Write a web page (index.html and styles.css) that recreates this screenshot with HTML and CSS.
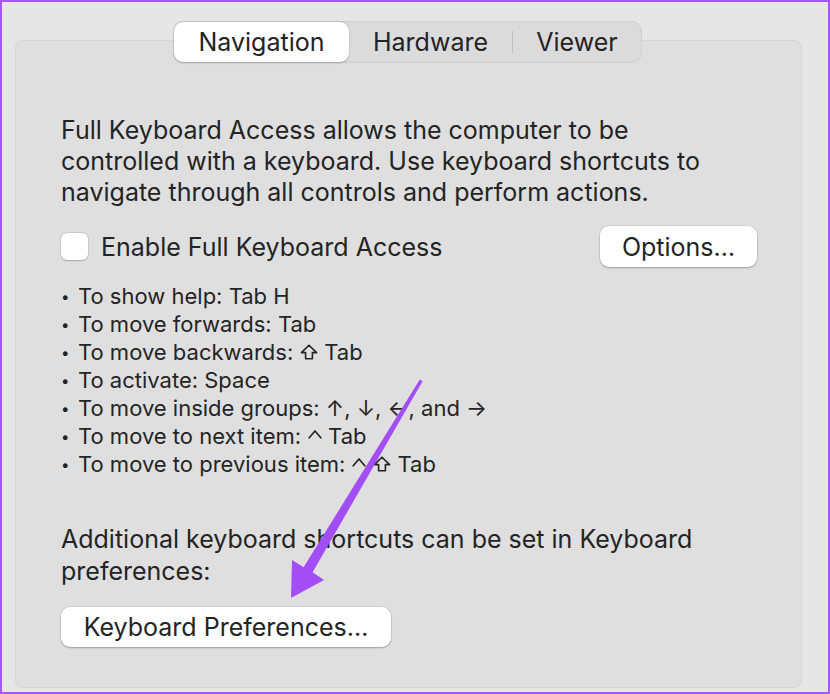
FILE: index.html
```html
<!DOCTYPE html>
<html>
<head>
<meta charset="utf-8">
<link rel="stylesheet" href="styles.css">
</head>
<body>
<div class="frame">
  <div class="tabs-row">
    <div class="tabs">
      <div class="tab tab-nav active">Navigation</div>
      <div class="tab tab-hw">Hardware</div>
      <div class="sep"></div>
      <div class="tab tab-view">Viewer</div>
    </div>
  </div>
  <div class="panel">
    <p class="intro">Full Keyboard Access allows the computer to be controlled with a keyboard. Use keyboard shortcuts to navigate through all controls and perform actions.</p>
    <div class="check-row">
      <label class="check"><span class="box"></span><span class="check-label">Enable Full Keyboard Access</span></label>
      <div class="btn btn-options">Options…</div>
    </div>
    <ul class="list">
      <li>To show help: Tab H</li>
      <li>To move forwards: Tab</li>
      <li><span>To move backwards:</span><svg class="key shift" width="18" height="16" viewBox="0 0 18 16"><path d="M9 1.2 L16.6 8.6 L12.4 8.6 L12.4 14.8 L5.6 14.8 L5.6 8.6 L1.4 8.6 Z" fill="none" stroke="#242424" stroke-width="1.6" stroke-linejoin="round"/></svg><span>Tab</span></li>
      <li>To activate: Space</li>
      <li>To move inside groups: ↑, ↓, ←, and →</li>
      <li><span>To move to next item:</span><svg class="key caret" width="14" height="10" viewBox="0 0 14 10"><path d="M1.2 8.8 L7 2 L12.8 8.8" fill="none" stroke="#242424" stroke-width="1.7" stroke-linecap="round" stroke-linejoin="round"/></svg><span>Tab</span></li>
      <li><span>To move to previous item:</span><svg class="key caret" width="14" height="10" viewBox="0 0 14 10"><path d="M1.2 8.8 L7 2 L12.8 8.8" fill="none" stroke="#242424" stroke-width="1.7" stroke-linecap="round" stroke-linejoin="round"/></svg><svg class="key shift" width="18" height="16" viewBox="0 0 18 16"><path d="M9 1.2 L16.6 8.6 L12.4 8.6 L12.4 14.8 L5.6 14.8 L5.6 8.6 L1.4 8.6 Z" fill="none" stroke="#242424" stroke-width="1.6" stroke-linejoin="round"/></svg><span>Tab</span></li>
    </ul>
    <p class="extra">Additional keyboard shortcuts can be set in Keyboard preferences:</p>
    <div class="btn btn-prefs">Keyboard Preferences…</div>
  </div>
  <svg class="arrow" width="830" height="694" viewBox="0 0 830 694">
    <path d="M419.8 379.4 L422.6 381.2 L312.6 572.2 L324 580 L291 598 L292 560 L303.6 567.2 Z" fill="#a24df5"/>
  </svg>
</div>
</body>
</html>
```
FILE: styles.css
```css
html, body {
  margin: 0;
  padding: 0;
}
body {
  width: 830px;
  height: 694px;
  overflow: hidden;
  font-family: Inter, "Noto Sans", "DejaVu Sans", sans-serif;
  color: #242424;
}
.frame {
  position: relative;
  box-sizing: border-box;
  width: 830px;
  height: 694px;
  border: 2px solid #a658f6;
  background: #e6e6e6;
  padding: 19px 25px 0 13px;
}
.tabs-row {
  display: flex;
  position: relative;
  z-index: 1;
  padding-left: 158px;
}
.tabs {
  display: flex;
  align-items: center;
  height: 42px;
  box-sizing: border-box;
  background: #dbdbdb;
  border: 1px solid #d0d0d0;
  border-radius: 10px;
  font-size: 25px;
}
.tab {
  height: 40px;
  box-sizing: border-box;
  display: flex;
  align-items: center;
  justify-content: center;
  border-radius: 9px;
}
.tab-nav { width: 175px; }
.tab-hw { width: 163px; }
.tab-view { width: 128px; }
.active {
  background: #ffffff;
  box-shadow: 0 0.5px 2px rgba(0,0,0,0.25);
}
.sep {
  width: 1px;
  height: 22px;
  background: #bdbdbd;
}
.panel {
  margin-top: -23px;
  width: 787px;
  height: 648px;
  box-sizing: border-box;
  background: #dfdfdf;
  border: 1px solid #d5d5d5;
  border-radius: 8px;
  padding: 74px 44px 0 45px;
}
.intro {
  margin: 0;
  font-size: 25px;
  line-height: 31px;
  width: 690px;
}
.check-row {
  margin-top: 18px;
  display: flex;
  align-items: center;
  justify-content: space-between;
  height: 41px;
}
.check {
  display: flex;
  align-items: center;
}
.box {
  width: 27px;
  height: 27px;
  box-sizing: border-box;
  background: #fff;
  border-radius: 6px;
  box-shadow: 0 0 0 0.5px rgba(0,0,0,0.12), 0 0.5px 1.5px rgba(0,0,0,0.2);
}
.check-label {
  margin-left: 13px;
  font-size: 25px;
}
.btn {
  display: flex;
  align-items: center;
  justify-content: center;
  box-sizing: border-box;
  background: #fff;
  border-radius: 9px;
  box-shadow: 0 0 0 0.5px rgba(0,0,0,0.1), 0 1px 2px rgba(0,0,0,0.25);
  font-size: 25px;
}
.btn-options {
  width: 157px;
  height: 41px;
}
.list {
  list-style: none;
  margin: 15px 0 0;
  padding: 0;
  font-size: 22px;
}
.list li {
  display: flex;
  align-items: center;
  height: 28px;
  white-space: nowrap;
}
.list li::before {
  content: "•";
  width: 17px;
  font-size: 15px;
  flex: none;
}
.key {
  flex: none;
  margin: 0 6px 0 7px;
}
.key + .key {
  margin-left: 1px;
}
.shift {
  margin-top: -1px;
}
.caret {
  margin-top: -4px;
}
.extra {
  margin: 45px 0 0;
  font-size: 25px;
  line-height: 32px;
  width: 690px;
}
.btn-prefs {
  margin-top: 20px;
  width: 330px;
  height: 40px;
}
.arrow {
  position: absolute;
  left: -2px;
  top: -2px;
  pointer-events: none;
}
```
